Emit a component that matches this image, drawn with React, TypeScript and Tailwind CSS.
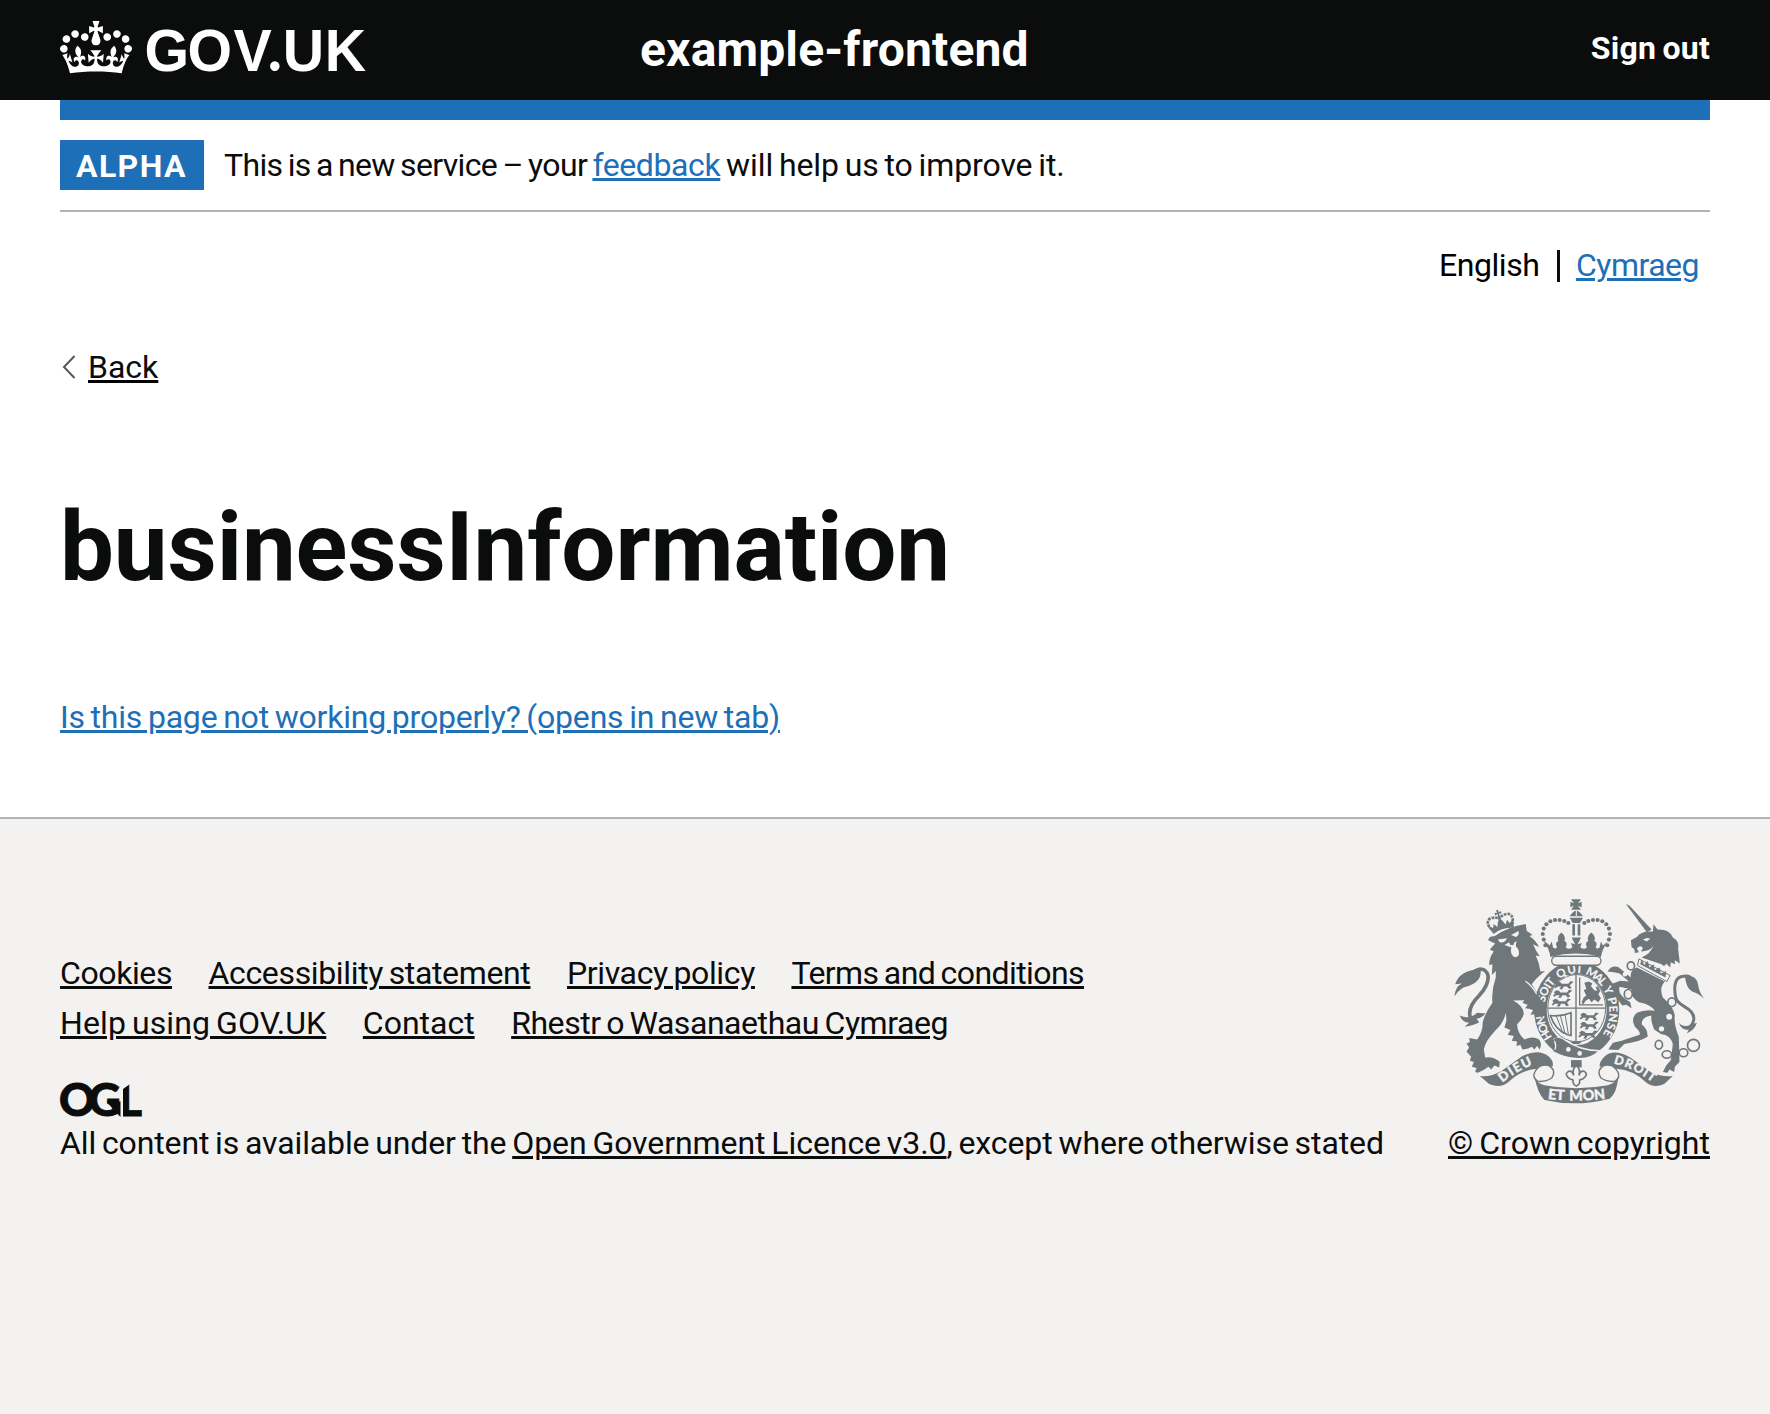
import type { ReactNode } from 'react';

const CROWN =
  'M25 30.2c3.5 1.5 7.7-.2 9.1-3.7 1.5-3.6-.2-7.8-3.9-9.2-3.6-1.4-7.6.3-9.1 3.9-1.4 3.5.3 7.5 3.9 9zM9 39.5c3.6 1.5 7.8-.2 9.2-3.7 1.5-3.6-.2-7.8-3.9-9.1-3.6-1.5-7.6.2-9.1 3.8-1.4 3.5.3 7.5 3.8 9zM4.4 57.2c3.5 1.5 7.7-.2 9.1-3.8 1.5-3.6-.2-7.7-3.9-9.1-3.5-1.5-7.6.3-9.1 3.8-1.4 3.5.3 7.6 3.9 9.1zm38.3-21.4c3.5 1.5 7.7-.2 9.1-3.8 1.5-3.6-.2-7.7-3.9-9.1-3.6-1.5-7.6.3-9.1 3.8-1.3 3.6.4 7.7 3.9 9.1zm64.4-5.6c-3.6 1.5-7.8-.2-9.1-3.7-1.5-3.6.2-7.8 3.8-9.2 3.6-1.4 7.7.3 9.2 3.9 1.3 3.5-.4 7.5-3.9 9zm15.9 9.3c-3.6 1.5-7.7-.2-9.1-3.7-1.5-3.6.2-7.8 3.7-9.1 3.6-1.5 7.7.2 9.2 3.8 1.5 3.5-.3 7.5-3.8 9zm4.7 17.7c-3.6 1.5-7.8-.2-9.2-3.8-1.5-3.6.2-7.7 3.9-9.1 3.6-1.5 7.7.3 9.2 3.8 1.3 3.5-.4 7.6-3.9 9.1zM89.3 35.8c-3.6 1.5-7.8-.2-9.2-3.8-1.4-3.6.2-7.7 3.9-9.1 3.6-1.5 7.7.3 9.2 3.8 1.4 3.6-.3 7.7-3.9 9.1zM69.7 17.7l8.9 4.7V9.3l-8.9 2.8c-.2-.3-.5-.6-.9-.9L72.4 0H59.6l3.5 11.2c-.3.3-.6.5-.9.9l-8.8-2.8v13.1l8.8-4.7c.3.3.6.7.9.9l-5 15.4v.1c-.2.8-.4 1.6-.4 2.4 0 4.1 3.1 7.5 7 8.1h.2c.3 0 .7.1 1 .1.4 0 .7 0 1-.1h.2c4-.6 7.1-4.1 7.1-8.1 0-.8-.1-1.7-.4-2.4V34l-5.1-15.4c.4-.2.7-.6 1-.9zM66 92.8c16.9 0 32.8 1.1 47.1 3.2 4-16.9 8.9-26.7 14-33.5l-9.6-3.4c1 4.9 1.1 7.2 0 10.2-1.5-1.4-3-4.3-4.2-8.7L108.6 76c2.8-2 5-3.2 7.5-3.3-4.4 9.4-10 11.9-13.6 11.2-4.3-.8-6.3-4.6-5.6-7.9 1-4.7 5.7-5.9 8-.5 4.3-8.7-3-11.4-7.6-8.8 7.1-7.2 7.9-13.5 2.1-21.1-8 6.1-8.1 12.3-4.5 20.8-4.7-5.4-12.1-2.5-9.5 6.2 3.4-5.2 7.9-2 7.2 3.1-.6 4.3-6.4 7.8-13.5 7.2-10.3-.9-10.9-8-11.2-13.8 2.5-.5 7.1 1.8 11 7.3L80.2 60c-4.1 4.4-8 5.3-12.3 5.4 1.4-4.4 8-11.6 8-11.6H55.5s6.4 7.2 7.9 11.6c-4.2-.1-8-1-12.3-5.4l1.4 16.4c3.9-5.5 8.5-7.7 10.9-7.3-.3 5.8-.9 12.8-11.1 13.8-7.2.6-12.9-2.9-13.5-7.2-.7-5 3.8-8.3 7.1-3.1 2.7-8.7-4.6-11.6-9.4-6.2 3.7-8.5 3.6-14.7-4.6-20.8-5.8 7.6-5 13.9 2.2 21.1-4.7-2.6-11.9.1-7.7 8.8 2.3-5.5 7.1-4.2 8.1.5.7 3.3-1.3 7.1-5.7 7.9-3.5.7-9-1.8-13.5-11.2 2.5.1 4.7 1.3 7.5 3.3l-4.7-15.4c-1.2 4.4-2.7 7.2-4.3 8.7-1.1-3-.9-5.3 0-10.2l-9.5 3.4c5 6.9 9.9 16.7 14 33.5 14.8-2.1 30.8-3.2 47.7-3.2z';

function GovLogo() {
  return (
    <svg viewBox="0 0 310 60" className="w-[310px] h-[60px] fill-white overflow-visible" role="img" aria-label="GOV.UK">
      <path d={CROWN} transform="translate(0 1) scale(.5455)" />
      <text
        y="51"
        x="88.6 133.6 181.6 217.9 233.2 277.3"
        transform="scale(.955 1)"
        className="font-['Liberation_Sans',sans-serif] font-bold text-[60px]"
      >
        GOV<tspan className="font-['Lato',sans-serif] font-black">.</tspan>UK
      </text>
    </svg>
  );
}

function OglLogo() {
  return (
    <svg viewBox="0 0 82 34" className="w-[82px] h-[34px] fill-[#0b0c0c] overflow-visible" role="img" aria-label="OGL">
      <text y="33.300" x="-1 28.3 58.6" stroke="#0b0c0c" strokeWidth=".9" className="font-['Lato',sans-serif] font-black text-[45px]">OGL</text>
      <path d="M46.500 18.500h14V34l-5-5z" />
      <path d="M61-2h10.500v2L63 6v28h-2z" className="fill-[#f3f2f1]" />
    </svg>
  );
}

const BEADS = [
  [375, 195], [370, 178], [367, 161], [370, 145], [378, 132], [390, 123], [404, 119], [418, 119], [432, 122], [444, 128],
];

function Lion() {
  return (
    <g>
      <g transform="translate(250 152) rotate(-17)">
        <path d="M-32 0q32-13 64 0l5-26-13 8-5-11-8 12-7-16-6-4-6 4-7 16-8-12-5 11-13-8z" />
        <path d="M-33-14Q-48-40-28-48Q-8-48-2-38Q6-48 26-46Q44-38 31-13" fill="none" stroke="currentColor" strokeWidth="8" strokeDasharray="8 3" />
        <path d="M-5-66h8l-2 8 8-2v8l-8-2 2 14h-8l2-14-8 2v-8l8 2z" />
        <path d="M-33 3q33-13 66 0" fill="none" stroke="#f3f2f1" strokeWidth="3" />
      </g>
      <path d="M203 180Q206 166 222 168Q264 138 316 131L319 152Q330 158 336 164L327 167Q348 182 356 200L338 192Q346 212 358 228L346 226Q356 246 360 274L374 272Q348 292 334 312Q350 336 362 360Q380 376 378 412L368 402L366 416L356 404L346 412L342 402L330 404L338 390L326 386L314 384L322 374L306 368L312 360L278 361Q308 376 310 400Q306 420 290 432Q290 458 312 478Q338 466 356 478Q366 490 358 508L350 498L342 508L334 500Q322 508 306 508L300 494L288 498L290 484L274 482L280 468L262 464L270 450L252 442L258 420L256 398Q250 428 224 452Q194 484 190 508L194 532Q220 528 238 546L236 562L222 556L212 568L204 560Q188 572 172 578L164 576L168 564L154 560L160 546L148 542L152 530L138 514L146 502L138 490L148 486L146 474L170 478Q188 452 186 430Q192 400 216 368Q212 330 226 292L226 272L214 284L216 252L206 254Q206 232 220 214L208 208L224 190Z" />
      <path d="M152 280Q190 252 202 284Q208 310 176 346Q136 386 152 418" fill="none" stroke="currentColor" strokeWidth="11" />
      <path d="M180 266Q186 304 142 318Q118 322 102 348Q104 320 124 310L104 312Q116 270 180 266ZM118 406Q146 420 170 398L196 400Q180 416 168 416L176 426Q160 436 132 440L146 428Q124 426 118 406Z" />
      <g className="fill-[#f3f2f1]">
        <path d="M232 178l28-4q-8 16-22 12zM272 164l22-12q4 14-8 18zM252 194l14-8 4 10 18-14-2 16q12 10 9 26-10 14-20 0-6-10-2-22zM316 302q22 14 34 38l-3 3q-12-24-33-38z" />
      </g>
      <path d="M268 190l14-4-4 10z" />
    </g>
  );
}

function Unicorn() {
  return (
    <g>
      <path d="M617 71L628 76L694 148L680 156Z" />
      <path d="M698 154L700 132L712 148Q748 146 758 172Q778 182 774 206L779 250L764 240L764 252L752 246L750 262L738 250Q734 262 724 252L664 232Q690 222 700 196Q690 214 662 214L668 204Q662 192 650 204L656 216L644 218L642 206L634 200L632 180L650 170Q664 150 698 154Z" />
      <path d="M650 262L734 304Q716 322 728 352Q760 380 764 406Q760 430 776 470L778 546L764 560L762 576L748 568L742 578L728 576L738 556L752 540L758 492Q752 466 722 462L702 448Q690 420 694 406Q664 410 664 432Q684 448 682 470Q660 484 612 492L594 510L564 508L578 488L604 482L658 464Q662 456 644 440Q630 414 650 398Q676 386 704 392Q692 372 656 366Q630 352 634 328L598 320Q590 344 630 366L634 384L618 374L606 376Q582 346 572 312L600 302L626 304L598 280Q582 276 562 274Q572 254 594 260L632 292Q628 270 650 262Z" />
      <path d="M766 350Q756 290 790 288Q800 286 810 290M766 348Q768 366 794 380Q826 398 820 422Q816 440 800 444" fill="none" stroke="currentColor" strokeWidth="9" />
      <path d="M794 286Q830 284 834 314Q836 336 852 356Q836 340 816 334Q798 326 794 286ZM776 428Q790 444 812 434L830 428Q824 450 800 460L806 448Q784 452 776 428Z" />
      <path d="M656 236L750 286L740 304L652 256Z" fill="#f3f2f1" stroke="currentColor" strokeWidth="3" />
      <path d="M660 252l4-14 8 16 10-12 6 20 12-10 4 18 14-8 4 18 16-8-2 20z" />
      <path d="M668 178q14-8 22-2-8 4-10 8z" fill="#f3f2f1" />
      <g fill="#f3f2f1" stroke="currentColor" strokeWidth="5">
        <ellipse cx="632" cy="257" rx="11" ry="12" />
        <ellipse cx="624" cy="342" rx="12" ry="14" />
        <ellipse cx="755" cy="366" rx="12" ry="13" />
        <ellipse cx="716" cy="494" rx="11" ry="13" />
        <ellipse cx="740" cy="523" rx="14" ry="11" />
        <ellipse cx="790" cy="518" rx="13" ry="12" />
        <circle cx="820" cy="496" r="18" />
      </g>
      <g className="fill-[#f3f2f1]">
        <circle cx="614" cy="282" r="7" />
        <circle cx="747" cy="410" r="9" />
        <circle cx="724" cy="446" r="8" />
      </g>
    </g>
  );
}

function RoyalCrown() {
  return (
    <g>
      <path d="M452 57h30l-9 12 11-5v17l-11-5 9 12h-30l9-12-11 5v-17l11 5zM448 108q20-34 40 0zM448 112h40l-9 16h-22zM456 132h8v34h-8zM472 132h8v34h-8z" />
      <path d="M468 90v18" stroke="#f3f2f1" strokeWidth="3" />
      {BEADS.map(([x, y]) => (
        <g key={y * 1000 + x}>
          <circle cx={x} cy={y} r="6.200" />
          <circle cx={936 - x} cy={y} r="6.200" />
        </g>
      ))}
      <path d="M374 184l14 12 6-12 4 18q8 6 12-2-8-12 4-18-6-14 9-25 15 11 9 25 12 6 4 18 6 10 20 2l-4-14 12 4-10-20h28l-10 20 12-4-4 14q14 8 20-2-8-12 4-18-6-14 9-25 15 11 9 25 12 6 4 18 4 8 12 2l4-18 6 12 14-12q-16 22-20 46-76-20-152 0-4-26-20-46z" />
      <rect x="394" y="228" width="148" height="27" rx="13.500" fill="#f3f2f1" stroke="currentColor" strokeWidth="4" />
    </g>
  );
}

function Walker({ x, y }: { x: number; y: number }) {
  return (
    <path
      transform={`translate(${x} ${y})`}
      d="M0 6l8-6 8 2 4 5h20l6-8 10 2-6 5-6 5 6 9-8 2-6-7H26l-4 8h-9l5-8H8l-6 5-4-3 6-7z"
    />
  );
}

function Garter() {
  return (
    <g>
      <ellipse cx="469" cy="388" rx="134" ry="153" fill="#f3f2f1" />
      <ellipse cx="469" cy="388" rx="109" ry="126" fill="none" stroke="currentColor" strokeWidth="38" />
      <ellipse cx="469" cy="384" rx="87" ry="101" fill="#f3f2f1" stroke="currentColor" strokeWidth="3" />
      <path d="M467 283v202M382 384h174" stroke="currentColor" strokeWidth="4" />
      <path d="M478 292v82h70" fill="none" stroke="currentColor" strokeWidth="4" />
      <Walker x={404} y={304} />
      <Walker x={400} y={330} />
      <Walker x={396} y={356} />
      <Walker x={480} y={398} />
      <Walker x={480} y={425} />
      <Walker x={476} y={452} />
      <path d="M484 366l6-14 8-6-8-16 8-4-6-18 14-4 10 6-4 8 10 12 10 2-6-10 6-4 8 14-6 10 8 12-8 12-12-8-8 8-8-10-10 6-8 12z" />
      <path d="M390 406q32 4 62-8v68l-10-2q-38-14-52-58z" fill="none" stroke="currentColor" strokeWidth="5" />
      <path d="M408 408l18 46M420 406l14 54M434 402l10 60" fill="none" stroke="currentColor" strokeWidth="3" />
      <path d="M448 484h38l-10 8h-18z" />
      <path d="M400 478Q420 466 434 480Q480 512 538 512Q510 538 474 536Q424 532 400 514Q412 500 400 478Z" stroke="#f3f2f1" strokeWidth="4" />
      <path d="M424 480q-14-10-26 2-8 14 4 30 14 8 18-2" fill="none" stroke="currentColor" strokeWidth="5" />
      <circle cx="444" cy="508" r="7" className="fill-[#f3f2f1]" />
      <circle cx="478" cy="520" r="7" className="fill-[#f3f2f1]" />
      <path id="motto" d="M418 492A98 115 0 1 1 520 492" fill="none" />
      <g className="fill-[#f3f2f1] font-['Lato',sans-serif] font-black text-[35px]">
        <text><textPath href="#motto" startOffset="30" textLength="72">HON</textPath></text>
        <text><textPath href="#motto" startOffset="139" textLength="72">SOIT</textPath></text>
        <text><textPath href="#motto" startOffset="223" textLength="70">QUI</textPath></text>
        <text><textPath href="#motto" startOffset="305" textLength="64">MAL</textPath></text>
        <text><textPath href="#motto" startOffset="376">Y</textPath></text>
        <text><textPath href="#motto" startOffset="408" textLength="112">PENSE</textPath></text>
      </g>
    </g>
  );
}

function Scroll() {
  return (
    <g>
      <path d="M178 588Q210 592 244 572L306 528Q356 504 386 530Q402 546 396 560L372 556L350 566Q300 570 264 606Q240 626 206 612Z" />
      <path d="M758 588Q726 592 692 576L630 532Q580 504 552 530Q536 546 538 560L566 556L588 566Q640 570 676 606Q700 626 732 612Z" />
      <g fill="none" stroke="currentColor" strokeWidth="4">
        <path d="M350 566Q330 590 352 604Q376 606 394 594Q410 570 384 556Q362 552 350 566" fill="#f3f2f1" />
        <path d="M586 566Q606 590 584 604Q560 606 542 594Q526 570 552 556Q574 552 586 566" fill="#f3f2f1" />
      </g>
      <path d="M342 590Q344 606 372 616Q468 634 562 616Q590 606 594 590Q590 640 568 656Q468 682 372 660Q352 640 342 590Z" />
      <path d="M452 540h32v22h-32z" />
      <path d="M468 556q14 12 8 30 4-16 16-12 14 10-4 22l-10 4q2 12-10 18-12-6-10-18l-10-4q-18-12-4-22 12-4 16 12-6-18 8-30z" fill="#f3f2f1" stroke="currentColor" strokeWidth="5" />
      <path id="dieu" d="M246 608Q290 572 346 550" fill="none" />
      <path id="droit" d="M580 550Q640 564 698 608" fill="none" />
      <path id="etmon" d="M382 657Q468 667 558 656" fill="none" />
      <g className="fill-[#f3f2f1] font-['Lato',sans-serif] font-black" stroke="#f3f2f1" strokeWidth="1">
        <text className="text-[39px]"><textPath href="#dieu" textLength="106">DIEU</textPath></text>
        <text className="text-[37px]"><textPath href="#droit" textLength="130">DROIT</textPath></text>
        <text className="text-[43px] [word-spacing:6px]"><textPath href="#etmon" textLength="174">ET MON</textPath></text>
      </g>
    </g>
  );
}

function Crest() {
  return (
    <svg viewBox="101 56 750 613" className="w-[250px] h-[204px] text-[#6f777b] fill-current overflow-visible" role="img" aria-label="Royal coat of arms">
      <Garter />
      <RoyalCrown />
      <Lion />
      <Unicorn />
      <Scroll />
    </svg>
  );
}

function A({ className = '', children }: { className?: string; children: ReactNode }) {
  return <a href="#" className={`underline decoration-[3px] underline-offset-[2px] ${className}`}>{children}</a>;
}

export default function App() {
  return (
    <div className="min-h-screen flex flex-col bg-white text-[#0b0c0c] font-['Roboto',sans-serif] text-[32px] leading-[40px] [word-spacing:-2px] antialiased">
      <header className="h-[100px] px-[60px] bg-[#0b0c0c] text-white flex items-start">
        <a href="#" className="w-[580px] pt-[20px]"><GovLogo /></a>
        <a href="#" className="pt-[25px] text-[48px] leading-[50px] font-bold tracking-[0.15px]">example-frontend</a>
        <a href="#" className="ml-auto pt-[28px] font-bold tracking-[0.25px]">Sign out</a>
      </header>

      <div className="px-[60px] flex flex-col">
        <div className="h-[20px] bg-[#1d70b8]" />
        <div className="flex items-center gap-[20px] py-[20px] border-b-2 border-[#b1b4b6]">
          <strong className="w-[144px] h-[50px] pl-[16px] bg-[#1d70b8] text-white font-bold leading-[52px] tracking-[1.4px]">ALPHA</strong>
          <p className="whitespace-nowrap">
            <span className="tracking-[-0.65px]">This is a new service – your </span>
            <A className="text-[#1d70b8] tracking-[-0.4px]">feedback</A>
            <span className="tracking-[-0.1px]"> will help us to improve it.</span>
          </p>
        </div>

        <nav className="mt-[33px] pr-[11px] flex justify-end items-center">
          <span className="text-black tracking-[-0.45px]">English</span>
          <span className="w-[3px] h-[32px] mt-[2px] ml-[17.5px] mr-[16px] bg-[#0b0c0c]" />
          <A className="text-[#1d70b8] tracking-[-0.5px]">Cymraeg</A>
        </nav>

        <div className="mt-[62px] flex items-center gap-[13px]">
          <svg viewBox="0 0 15 24" className="w-[15px] h-[24px] overflow-visible fill-none stroke-[#505a5f] stroke-2">
            <path d="M14.500 1L4 12l10.500 11" />
          </svg>
          <A className="decoration-black">Back</A>
        </div>

        <h1 className="mt-[110px] text-[96px] leading-[100px] font-bold tracking-[-0.15px]">businessInformation</h1>

        <p className="mt-[100px]">
          <A className="text-[#1d70b8] tracking-[-0.2px]">Is this page not working properly? (opens in new tab)</A>
        </p>
      </div>

      <footer className="mt-[80px] grow px-[60px] pt-[80px] bg-[#f3f2f1] border-t-2 border-[#b1b4b6]">
        <div className="flex justify-between items-end">
          <div>
            <ul className="flex gap-x-[36.5px]">
              <li><A className="tracking-[-0.4px]">Cookies</A></li>
              <li><A className="tracking-[-0.35px]">Accessibility statement</A></li>
              <li><A className="tracking-[-0.36px]">Privacy policy</A></li>
              <li><A className="tracking-[-0.58px]">Terms and conditions</A></li>
            </ul>
            <ul className="mt-[10px] flex gap-x-[36.5px]">
              <li><A className="tracking-[0.1px]">Help using GOV.UK</A></li>
              <li><A>Contact</A></li>
              <li><A className="tracking-[-0.44px]">Rhestr o Wasanaethau Cymraeg</A></li>
            </ul>
            <div className="mt-[40px] mb-[6px]"><OglLogo /></div>
            <p className="whitespace-nowrap">
              <span className="tracking-[-0.12px]">All content is available under the </span>
              <A className="tracking-[-0.07px]">Open Government Licence v3.0</A>
              <span className="tracking-[-0.1px]">, except where otherwise stated</span>
            </p>
          </div>
          <div className="flex flex-col items-center">
            <Crest />
            <A className="mt-[20px] tracking-[0.06px]">© Crown copyright</A>
          </div>
        </div>
      </footer>
    </div>
  );
}
